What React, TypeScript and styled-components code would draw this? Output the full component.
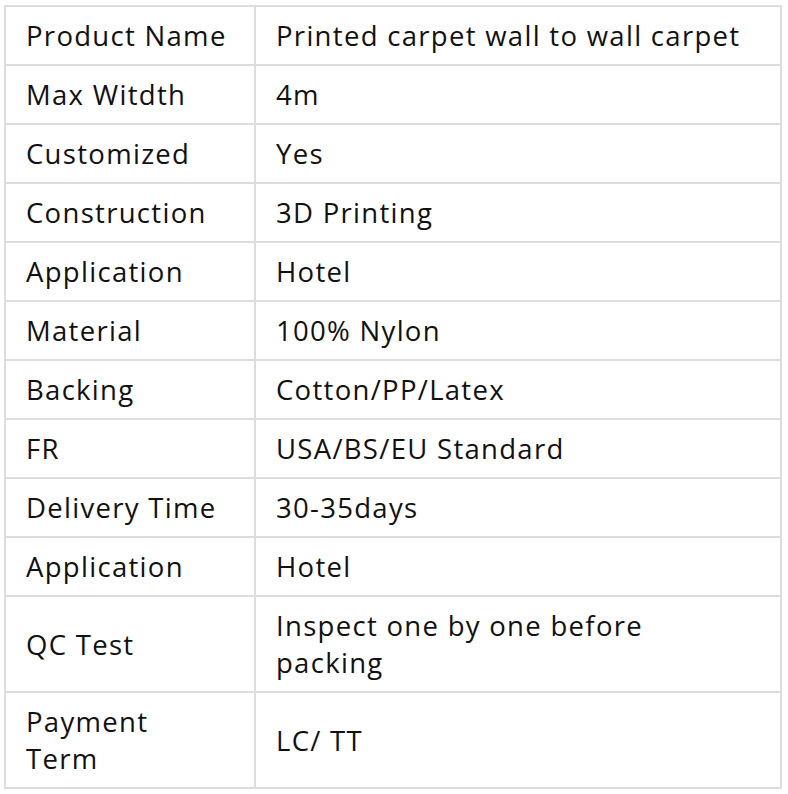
import styled, { createGlobalStyle } from "styled-components";

const GlobalStyle = createGlobalStyle`
    body {
        margin: 0;
        background: #ffffff;
    }
`;

const Wrapper = styled.div`
    padding: 5px 6px 6px 4px;
`;

const Table = styled.table`
    width: 778px;
    border-collapse: collapse;
    font-family: "Open Sans", "Liberation Sans", sans-serif;
    font-size: 27.5px;
    letter-spacing: 1.3px;
    line-height: 37px;
    color: #111111;
`;

const Cell = styled.td<{ $label?: boolean }>`
    border: 2px solid #dddddd;
    padding: 10px 20px;
    vertical-align: middle;
    white-space: pre-line;
    width: ${({ $label }) => ($label ? "208px" : "auto")};
`;

// line breaks follow the narrow column of the original page
const specs: [string, string][] = [
    ["Product Name", "Printed carpet wall to wall carpet"],
    ["Max Witdth", "4m"],
    ["Customized", "Yes"],
    ["Construction", "3D Printing"],
    ["Application", "Hotel"],
    ["Material", "100% Nylon"],
    ["Backing", "Cotton/PP/Latex"],
    ["FR", "USA/BS/EU Standard"],
    ["Delivery Time", "30-35days"],
    ["Application", "Hotel"],
    ["QC Test", "Inspect one by one before\npacking"],
    ["Payment\nTerm", "LC/ TT"],
];

export default function App() {
    return (
        <Wrapper>
            <GlobalStyle />
            <Table>
                <tbody>
                    {specs.map(([label, value], i) => (
                        <tr key={i}>
                            <Cell $label>{label}</Cell>
                            <Cell>{value}</Cell>
                        </tr>
                    ))}
                </tbody>
            </Table>
        </Wrapper>
    );
}
